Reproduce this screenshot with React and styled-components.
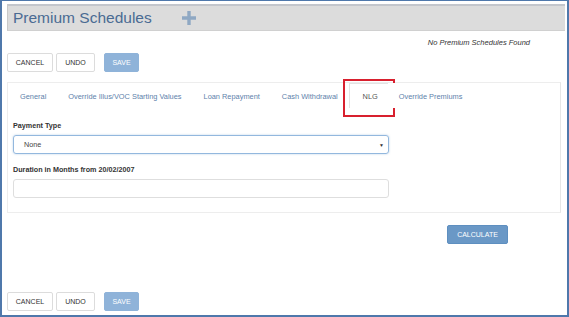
import React from "react";
import styled, { createGlobalStyle } from "styled-components";

const GlobalStyle = createGlobalStyle`
  html, body {
    margin: 0;
    padding: 0;
    background: #ffffff;
  }
  * {
    box-sizing: border-box;
  }
`;

const tabs = [
  "General",
  "Override Illus/VOC Starting Values",
  "Loan Repayment",
  "Cash Withdrawal",
  "NLG",
  "Override Premiums",
];

const Frame = styled.div`
  width: 569px;
  height: 317px;
  border: 2px solid #4f78ab;
  border-top-width: 1px;
  padding: 3px 2px 0 5px;
  font-family: "Liberation Sans", Arial, sans-serif;
  color: #333;
  display: flex;
  flex-direction: column;
`;

const Header = styled.div`
  height: 27px;
  background: #dcdcdc;
  border-top: 2px solid #c3c6cc;
  border-left: 1px solid #c9c9c9;
  border-bottom: 1px solid #d0d0d0;
  display: flex;
  align-items: center;
  padding-left: 5px;
`;

const Title = styled.h1`
  margin: 0;
  font-size: 15.5px;
  font-weight: normal;
  color: #4a6b93;
`;

const PlusIcon = styled.svg`
  margin-left: 30px;
  width: 14px;
  height: 14px;
`;

const InfoRow = styled.div`
  display: flex;
  justify-content: flex-end;
  padding-right: 35px;
  margin-top: 7px;
  height: 12px;
`;

const Info = styled.span`
  font-size: 7.5px;
  font-style: italic;
  color: #333;
`;

const ButtonRow = styled.div`
  display: flex;
  gap: 3px;
  margin-top: ${(p) => p.$top}px;
`;

const Button = styled.button`
  height: 19px;
  width: ${(p) => p.$w}px;
  padding: 0;
  margin-left: ${(p) => p.$gap || 0}px;
  border: 1px solid ${(p) => (p.$primary ? "#8fb3d9" : "#dcdcdc")};
  background: ${(p) => (p.$primary ? "#8fb3d9" : "#fff")};
  color: ${(p) => (p.$primary ? "#fff" : "#333")};
  border-radius: 2px;
  font-family: inherit;
  font-size: 7px;
  text-transform: uppercase;
`;

const Panel = styled.div`
  margin-top: 10px;
  margin-right: 4px;
  height: 131px;
  border: 1px solid #ededed;
  border-right-color: #e6e6e6;
`;

const TabList = styled.ul`
  list-style: none;
  margin: 0 0 0 1px;
  padding: 0;
  display: inline-flex;
  border-bottom: 1px solid #e8e8e8;
  height: 25px;
`;

const Tab = styled.li`
  position: relative;
  padding: 0 10px;
  display: flex;
  align-items: center;
  justify-content: center;
  font-size: 7.4px;
  color: ${(p) => (p.$active ? "#555" : "#5e82ab")};
  background: #fff;
  border: 1px solid ${(p) => (p.$active ? "#e3e3e3" : "transparent")};
  border-bottom: none;
  margin-bottom: -1px;
  width: ${(p) => (p.$active ? "43px" : "auto")};
  margin-right: ${(p) => (p.$active ? "-4px" : "0")};
`;

const Highlight = styled.span`
  position: absolute;
  left: -7px;
  right: -4px;
  top: -5px;
  bottom: -9px;
  border: 2px solid #d8202e;
  pointer-events: none;
`;

const Form = styled.div`
  padding: 13px 5px 0 5px;
  width: 386px;
`;

const Label = styled.label`
  display: block;
  font-size: 7.2px;
  font-weight: bold;
  color: #333;
  margin-bottom: 5px;
`;

const Field = styled.div`
  position: relative;
  height: 19px;
  border: 1px solid ${(p) => (p.$focus ? "#93b8de" : "#dedede")};
  border-radius: 3px;
  box-shadow: ${(p) => (p.$focus ? "0 0 2px rgba(102,153,204,0.5)" : "none")};
  display: flex;
  align-items: center;
  padding-left: 10px;
  font-size: 7.2px;
  color: #444;
  margin-bottom: ${(p) => p.$mb || 0}px;
`;

const Caret = styled.span`
  position: absolute;
  right: 4px;
  top: 6px;
  font-size: 5px;
  color: #333;
`;

const CalcRow = styled.div`
  display: flex;
  justify-content: flex-end;
  padding-right: 57px;
  margin-top: 12px;
`;

const CalcButton = styled.button`
  height: 19px;
  width: 61px;
  border: 1px solid #5e8fc0;
  background: #6a98c6;
  color: #fff;
  border-radius: 2px;
  font-family: inherit;
  font-size: 7px;
`;

const Actions = ({ top }) => (
  <ButtonRow $top={top}>
    <Button $w={46}>Cancel</Button>
    <Button $w={39}>Undo</Button>
    <Button $primary $w={35} $gap={6}>
      Save
    </Button>
  </ButtonRow>
);

export default function App() {
  return (
    <>
      <GlobalStyle />
      <Frame>
        <Header>
          <Title>Premium Schedules</Title>
          <PlusIcon viewBox="0 0 14 14">
            <path d="M5.3 0h3.4v5.3H14v3.4H8.7V14H5.3V8.7H0V5.3h5.3z" fill="#8fa8c3" />
          </PlusIcon>
        </Header>
        <InfoRow>
          <Info>No Premium Schedules Found</Info>
        </InfoRow>
        <Actions top={3} />
        <Panel>
          <TabList>
            {tabs.map((t) => (
              <Tab key={t} $active={t === "NLG"}>
                {t}
                {t === "NLG" && <Highlight />}
              </Tab>
            ))}
          </TabList>
          <Form>
            <Label>Payment Type</Label>
            <Field $focus $mb={11}>
              None
              <Caret>▼</Caret>
            </Field>
            <Label>Duration in Months from 20/02/2007</Label>
            <Field />
          </Form>
        </Panel>
        <CalcRow>
          <CalcButton>CALCULATE</CalcButton>
        </CalcRow>
        <Actions top={48} />
      </Frame>
    </>
  );
}
